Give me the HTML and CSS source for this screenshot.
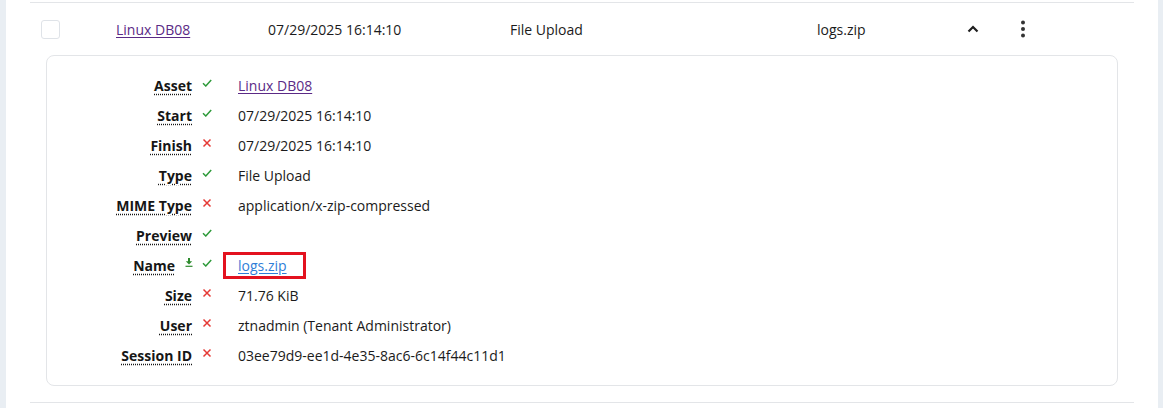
FILE: index.html
```html
<!DOCTYPE html>
<html>
<head>
<meta charset="utf-8">
<link rel="stylesheet" href="styles.css">
</head>
<body>
<div class="page">
  <div class="strip"></div>
  <main class="main">
    <div class="entry">
      <div class="summary">
        <div class="cell c-check"><span class="checkbox"></span></div>
        <div class="cell c-asset"><a class="visited" href="#">Linux DB08</a></div>
        <div class="cell c-date">07/29/2025 16:14:10</div>
        <div class="cell c-type">File Upload</div>
        <div class="cell c-name">logs.zip</div>
        <div class="cell c-toggle">
          <svg width="12" height="8" viewBox="0 0 12 8"><path d="M1.5 6.5 L6 2 L10.5 6.5" fill="none" stroke="#1f1f1f" stroke-width="2.2"/></svg>
        </div>
        <div class="cell c-menu">
          <svg width="6" height="18" viewBox="0 0 6 18"><circle cx="3" cy="2.5" r="2" fill="#333"/><circle cx="3" cy="9" r="2" fill="#333"/><circle cx="3" cy="15.5" r="2" fill="#333"/></svg>
        </div>
      </div>
      <div class="details">
        <div class="drow">
          <div class="dlabel"><span class="lbl">Asset</span><span class="icons"><svg class="ok" viewBox="0 0 10 8"><path d="M1 4.2 L3.8 7 L9.2 1" /></svg></span></div>
          <div class="dval"><a class="visited" href="#">Linux DB08</a></div>
        </div>
        <div class="drow">
          <div class="dlabel"><span class="lbl">Start</span><span class="icons"><svg class="ok" viewBox="0 0 10 8"><path d="M1 4.2 L3.8 7 L9.2 1" /></svg></span></div>
          <div class="dval">07/29/2025 16:14:10</div>
        </div>
        <div class="drow">
          <div class="dlabel"><span class="lbl">Finish</span><span class="icons"><svg class="no" viewBox="0 0 10 10"><path d="M1.5 1.5 L8.5 8.5 M8.5 1.5 L1.5 8.5" /></svg></span></div>
          <div class="dval">07/29/2025 16:14:10</div>
        </div>
        <div class="drow">
          <div class="dlabel"><span class="lbl">Type</span><span class="icons"><svg class="ok" viewBox="0 0 10 8"><path d="M1 4.2 L3.8 7 L9.2 1" /></svg></span></div>
          <div class="dval">File Upload</div>
        </div>
        <div class="drow">
          <div class="dlabel"><span class="lbl">MIME Type</span><span class="icons"><svg class="no" viewBox="0 0 10 10"><path d="M1.5 1.5 L8.5 8.5 M8.5 1.5 L1.5 8.5" /></svg></span></div>
          <div class="dval">application/x-zip-compressed</div>
        </div>
        <div class="drow">
          <div class="dlabel"><span class="lbl">Preview</span><span class="icons"><svg class="ok" viewBox="0 0 10 8"><path d="M1 4.2 L3.8 7 L9.2 1" /></svg></span></div>
          <div class="dval"></div>
        </div>
        <div class="drow">
          <div class="dlabel"><span class="lbl">Name</span><span class="icons"><svg class="dl" viewBox="0 0 8 9"><path d="M4 0 V4" stroke="#2e8b2e" stroke-width="2"/><path d="M0.8 3.2 H7.2 L4 6.4 Z" fill="#2e8b2e"/><path d="M0.5 8.3 H7.5" stroke="#2e8b2e" stroke-width="1.2"/></svg><svg class="ok" viewBox="0 0 10 8"><path d="M1 4.2 L3.8 7 L9.2 1" /></svg></span></div>
          <div class="dval"><span class="highlight"><a class="link" href="#">logs.zip</a></span></div>
        </div>
        <div class="drow">
          <div class="dlabel"><span class="lbl">Size</span><span class="icons"><svg class="no" viewBox="0 0 10 10"><path d="M1.5 1.5 L8.5 8.5 M8.5 1.5 L1.5 8.5" /></svg></span></div>
          <div class="dval">71.76 KiB</div>
        </div>
        <div class="drow">
          <div class="dlabel"><span class="lbl">User</span><span class="icons"><svg class="no" viewBox="0 0 10 10"><path d="M1.5 1.5 L8.5 8.5 M8.5 1.5 L1.5 8.5" /></svg></span></div>
          <div class="dval">ztnadmin (Tenant Administrator)</div>
        </div>
        <div class="drow">
          <div class="dlabel"><span class="lbl">Session ID</span><span class="icons"><svg class="no" viewBox="0 0 10 10"><path d="M1.5 1.5 L8.5 8.5 M8.5 1.5 L1.5 8.5" /></svg></span></div>
          <div class="dval">03ee79d9-ee1d-4e35-8ac6-6c14f44c11d1</div>
        </div>
      </div>
    </div>
  </main>
  <div class="strip strip-right"></div>
</div>
</body>
</html>
```

FILE: styles.css
```css
* { box-sizing: border-box; }
html, body { margin: 0; padding: 0; background: #ffffff; }
body {
  font-family: "Open Sans", "Liberation Sans", sans-serif;
  font-size: 14px;
  color: #1b1b1b;
  width: 1163px;
  height: 408px;
  overflow: hidden;
}
.page { display: flex; height: 408px; }
.strip { width: 6px; background: #e9eef3; flex: none; }
.strip-right { width: 5px; }
.main { flex: 1; padding: 2px 24px 0 24px; }
.entry { border-top: 1px solid #e3e5e8; border-bottom: 1px solid #e3e5e8; padding-bottom: 16px; }
.summary { display: flex; align-items: center; height: 52px; }
.cell { flex: none; }
.c-check { width: 86px; padding-left: 11px; display: flex; }
.checkbox { width: 19px; height: 19px; border: 1px solid #dfe3e8; border-radius: 3px; display: block; }
.c-asset { width: 152px; }
.c-date { width: 242px; }
.c-type { width: 307px; }
.c-name { width: 150px; }
.c-toggle { width: 53px; display: flex; }
.c-menu { display: flex; }
a { color: inherit; }
a.visited { color: #5b2a86; text-decoration: underline; text-underline-offset: 2px; }
a.link { color: #2f7ed8; text-decoration: underline; text-underline-offset: 2px; }
.details {
  margin: 0 16px;
  border: 1px solid #e3e5e8;
  border-radius: 8px;
  padding: 14px 0 15px 0;
}
.drow { display: flex; align-items: center; height: 30px; }
.dlabel { width: 165px; display: flex; justify-content: flex-end; align-items: center; }
.lbl {
  font-weight: 700;
  color: #161616;
  text-decoration: underline dotted;
  text-underline-offset: 3px;
}
.icons { display: flex; align-items: center; gap: 9px; margin-left: 10px; margin-top: -5px; }
.icons svg.ok { width: 10px; height: 8px; fill: none; stroke: #2e9a3a; stroke-width: 1.5; }
.icons svg.no { width: 10px; height: 10px; fill: none; stroke: #e53935; stroke-width: 1.5; }
.icons svg.dl { width: 8px; height: 9px; }
.dval { margin-left: 26px; }
.highlight { display: inline-block; border: 3px solid #e3121f; padding: 1px 16px 1px 12px; margin-left: -15px; }
```
